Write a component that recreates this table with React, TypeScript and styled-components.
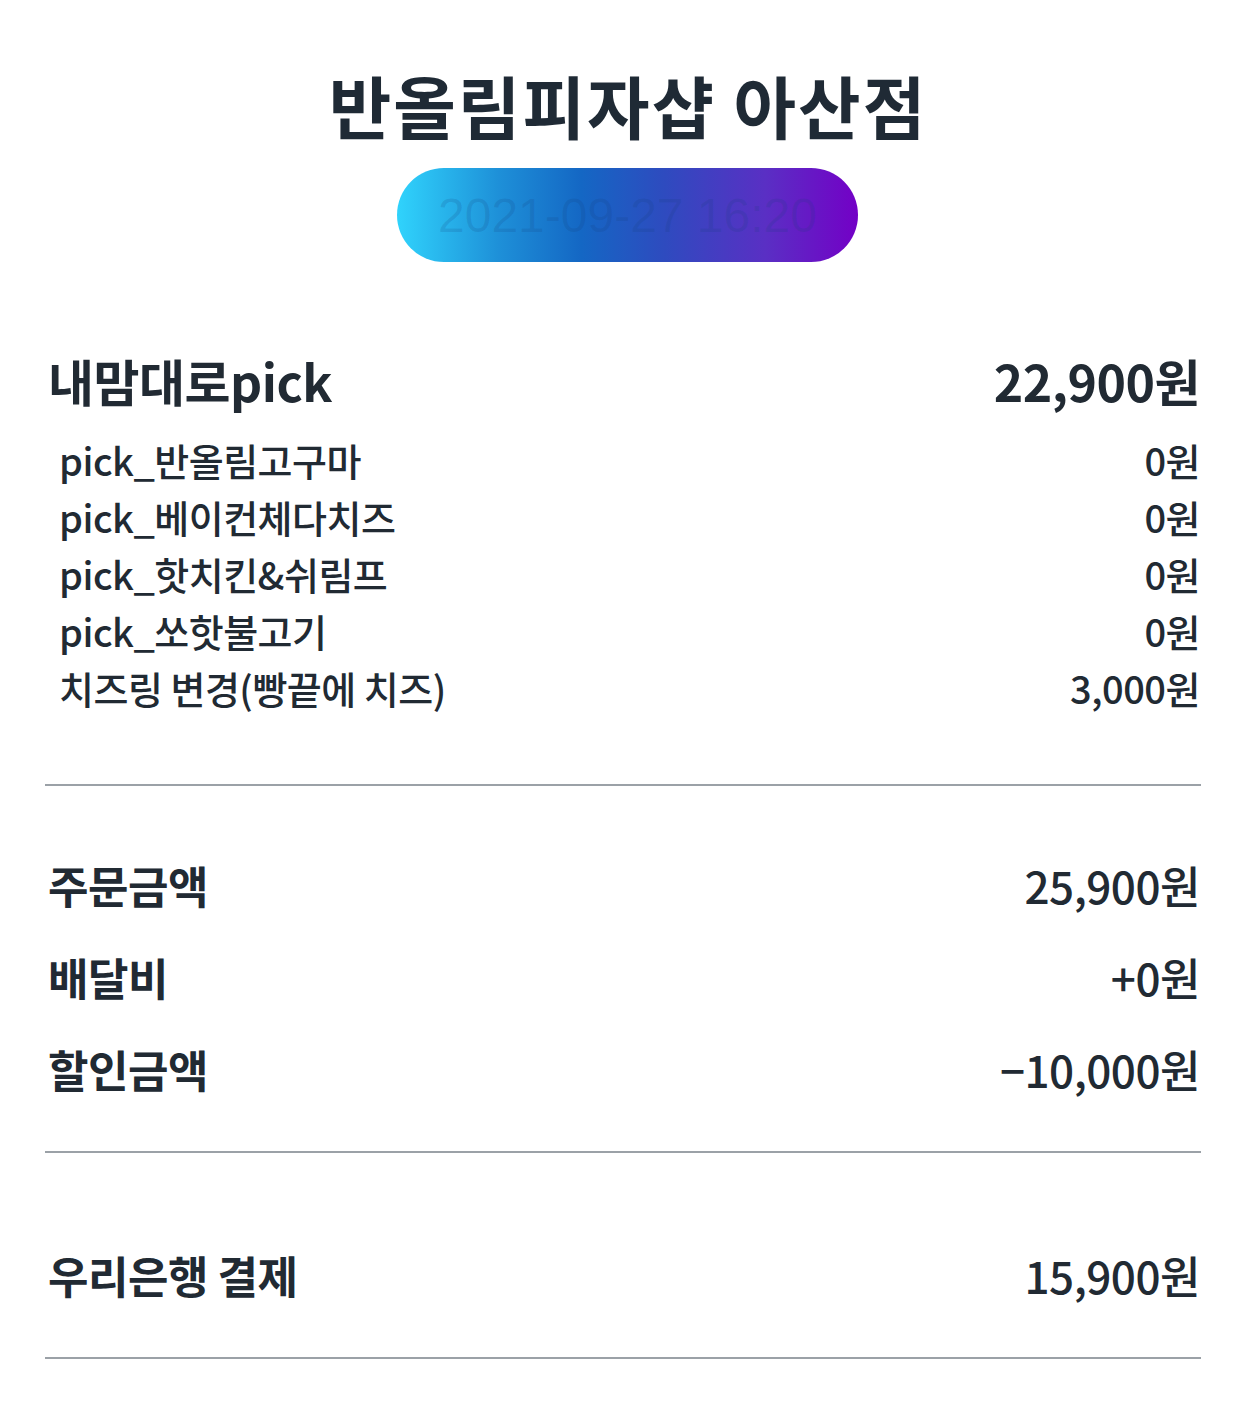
import React from "react";
import styled, { createGlobalStyle } from "styled-components";

const Global = createGlobalStyle`
  html, body { margin: 0; padding: 0; background: #ffffff; }
  body { font-family: "Noto Sans CJK KR", "Noto Sans", sans-serif; color: #212a33; }
`;

const Page = styled.div`
  width: 1156px;
  margin: 0 41px 0 45px;
  display: flex;
  flex-direction: column;
  padding-bottom: 40px;
`;

const Header = styled.header`
  display: flex;
  flex-direction: column;
  align-items: center;
  padding-top: 64px;
`;

const Title = styled.h1`
  margin: 0 0 0 10px;
  font-size: 68px;
  line-height: 82px;
  font-weight: 700;
  color: #1f2a35;
  letter-spacing: 2px;
`;

const DatePill = styled.div`
  margin: 22px 0 0 9px;
  width: 461px;
  height: 94px;
  border-radius: 47px;
  background: linear-gradient(90deg, #30d3fc 0%, #1e90d8 22%, #1467c4 40%, #2e4bbf 58%, #5a2fc4 80%, #7300c6 100%);
  display: flex;
  align-items: center;
  justify-content: center;
  font-family: "Liberation Sans", sans-serif;
  font-size: 48px;
  color: rgba(20, 60, 120, 0.16);
`;

const Section = styled.section<{ $top: number }>`
  margin-top: ${(p) => p.$top}px;
  display: flex;
  flex-direction: column;
`;

const Row = styled.div<{ $size: number; $height: number; $indent?: number }>`
  display: flex;
  justify-content: space-between;
  align-items: center;
  height: ${(p) => p.$height}px;
  padding-left: ${(p) => p.$indent ?? 3}px;
  padding-right: 1px;
  font-size: ${(p) => p.$size}px;
  letter-spacing: -0.5px;
`;

const Label = styled.span<{ $weight?: number }>`
  font-weight: ${(p) => p.$weight ?? 500};
`;

const Amount = styled.span<{ $weight?: number }>`
  font-weight: ${(p) => p.$weight ?? 500};
`;

const SubList = styled.div`
  margin-top: 21px;
  display: flex;
  flex-direction: column;
`;

const Summary = styled.div`
  display: flex;
  flex-direction: column;
  gap: 32px;
`;

const Divider = styled.hr<{ $top: number }>`
  margin: ${(p) => p.$top}px 0 0 0;
  border: none;
  height: 2px;
  background: #9ba1a7;
`;

const subItems = [
  { name: "pick_반올림고구마", price: "0원" },
  { name: "pick_베이컨체다치즈", price: "0원" },
  { name: "pick_핫치킨&쉬림프", price: "0원" },
  { name: "pick_쏘핫불고기", price: "0원" },
  { name: "치즈링 변경(빵끝에 치즈)", price: "3,000원" },
];

const summary = [
  { name: "주문금액", price: "25,900원" },
  { name: "배달비", price: "+0원" },
  { name: "할인금액", price: "−10,000원" },
];

export default function App() {
  return (
    <>
      <Global />
      <Page>
        <Header>
          <Title>반올림피자샵 아산점</Title>
          <DatePill>2021-09-27 16:20</DatePill>
        </Header>

        <Section $top={88}>
          <Row $size={50} $height={60}>
            <Label $weight={600}>내맘대로pick</Label>
            <Amount $weight={600}>22,900원</Amount>
          </Row>
          <SubList>
            {subItems.map((it) => (
              <Row key={it.name} $size={38} $height={57} $indent={14}>
                <Label>{it.name}</Label>
                <Amount>{it.price}</Amount>
              </Row>
            ))}
          </SubList>
        </Section>

        <Divider $top={68} />

        <Section $top={69}>
          <Summary>
            {summary.map((it) => (
              <Row key={it.name} $size={44} $height={60}>
                <Label $weight={600}>{it.name}</Label>
                <Amount>{it.price}</Amount>
              </Row>
            ))}
          </Summary>
        </Section>

        <Divider $top={52} />

        <Section $top={92}>
          <Row $size={44} $height={60}>
            <Label $weight={600}>우리은행 결제</Label>
            <Amount>15,900원</Amount>
          </Row>
        </Section>

        <Divider $top={52} />
      </Page>
    </>
  );
}
